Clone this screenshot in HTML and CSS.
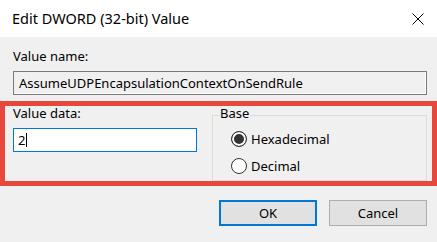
FILE: index.html
```html
<!DOCTYPE html>
<html lang="en">
<head>
    <meta charset="UTF-8">
    <meta name="viewport" content="width=device-width, initial-scale=1.0">
    <title>Edit DWORD (32-bit) Value</title>
    <link rel="stylesheet" href="styles.css">
</head>
<body>

<div class="titlebar">
    <span class="title">Edit DWORD (32-bit) Value</span>
    <svg class="close" width="12" height="12" viewBox="0 0 12 12">
        <path d="M0.5 0.5 L11.5 11.5 M11.5 0.5 L0.5 11.5" stroke="#000" stroke-width="1" fill="none"/>
    </svg>
</div>

<div class="name-section">
    <div class="label">Value name:</div>
    <div class="textbox readonly">AssumeUDPEncapsulationContextOnSendRule</div>
</div>

<!-- highlighted area -->
<div class="highlight">
    <div class="data-col">
        <div class="label">Value data:</div>
        <div class="textbox focused">2<span class="caret"></span></div>
    </div>
    <fieldset class="base">
        <legend>Base</legend>
        <div class="radios">
            <label class="radio"><input type="radio" name="base" checked> Hexadecimal</label>
            <label class="radio"><input type="radio" name="base"> Decimal</label>
        </div>
    </fieldset>
</div>

<div class="buttons">
    <button class="btn default">OK</button>
    <button class="btn">Cancel</button>
</div>

</body>
</html>
```
FILE: styles.css
```css
body {
    margin: 0;
    width: 437px;
    height: 242px;
    background-color: #f0f0f0;
    font-family: 'Noto Sans', 'Liberation Sans', sans-serif;
    font-size: 13px;
    line-height: 15px;
    color: #000;
    overflow: hidden;
}

.titlebar {
    height: 37px;
    background-color: #fff;
    display: flex;
    align-items: center;
    justify-content: space-between;
    padding: 0 13px 0 12px;
    box-sizing: border-box;
}

.title {
    font-size: 14.5px;
}

.name-section {
    padding: 12px 10px 0 13px;
}

.label {
    height: 15px;
}

.textbox {
    height: 24px;
    box-sizing: border-box;
    display: flex;
    align-items: center;
    padding-left: 5px;
    margin-top: 7px;
}

.textbox.readonly {
    border: 1px solid #7a7a7a;
    background-color: #f0f0f0;
    box-shadow: inset -1px -1px 0 #fff;
}

.textbox.focused {
    width: 184px;
    border: 1px solid #0078d7;
    background-color: #fff;
    padding-left: 4px;
}

.caret {
    display: inline-block;
    width: 1px;
    height: 14px;
    background-color: #000;
    margin-left: 1px;
}

.highlight {
    margin-top: 6px;
    height: 85px;
    box-sizing: border-box;
    border: 5px solid #e8473b;
    display: flex;
}

.data-col {
    width: 207px;
    flex: none;
    padding-left: 8px;
    box-sizing: border-box;
}

.base {
    flex: 1;
    margin: 0 5px 0 0;
    padding: 0 6px;
    border: 1px solid #dcdcdc;
    min-width: 0;
}

.base legend {
    padding: 0 1px 3px;
    line-height: 15px;
}

.radios {
    margin-left: 12px;
    padding-top: 7px;
    display: flex;
    flex-direction: column;
    gap: 11px;
}

.radio {
    display: flex;
    align-items: center;
    height: 16px;
    gap: 4px;
}

.radio input {
    appearance: none;
    -webkit-appearance: none;
    width: 16px;
    height: 16px;
    margin: 0;
    border: 1px solid #333;
    border-radius: 50%;
    background-color: #fff;
}

.radio input:checked {
    background-color: #333;
    box-shadow: inset 0 0 0 2px #fff;
}

.buttons {
    display: flex;
    justify-content: flex-end;
    gap: 12px;
    padding: 14px 10px 0 0;
}

.btn {
    width: 98px;
    height: 26px;
    box-sizing: border-box;
    background-color: #e1e1e1;
    border: 1px solid #adadad;
    font-family: inherit;
    font-size: 13px;
    color: #000;
    padding: 0;
}

.btn.default {
    border: 2px solid #0078d7;
}
```
